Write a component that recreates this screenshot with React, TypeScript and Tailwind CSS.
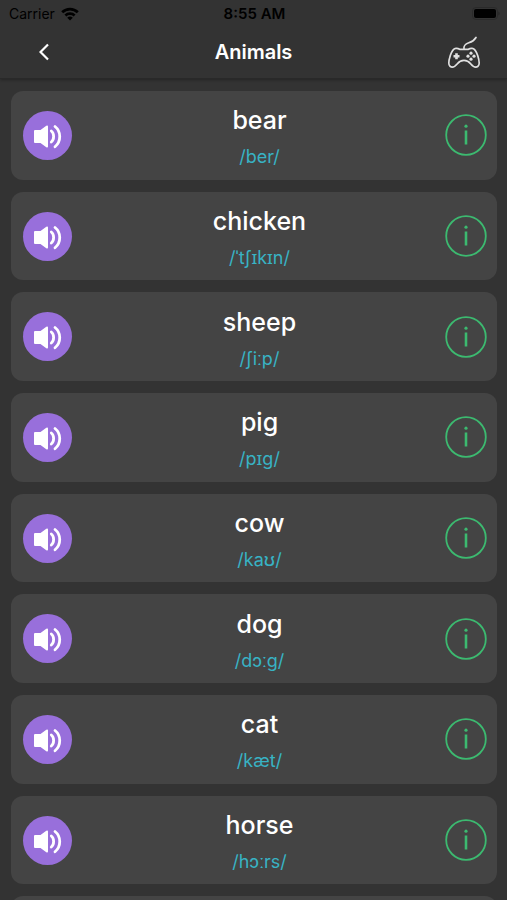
const words = [
  { word: 'bear', ipa: '/ber/' },
  { word: 'chicken', ipa: '/ˈtʃɪkɪn/' },
  { word: 'sheep', ipa: '/ʃiːp/' },
  { word: 'pig', ipa: '/pɪɡ/' },
  { word: 'cow', ipa: '/kaʊ/' },
  { word: 'dog', ipa: '/dɔːɡ/' },
  { word: 'cat', ipa: '/kæt/' },
  { word: 'horse', ipa: '/hɔːrs/' },
]

function WifiIcon() {
  return (
    <svg viewBox="0 0 18 14" className="h-[14px] w-[18px]" fill="none" stroke="currentColor" strokeWidth="2.8" aria-hidden="true">
      <path d="M1.2 5.2a11.2 11.2 0 0 1 15.6 0" />
      <path d="M4.4 8.5a6.6 6.6 0 0 1 9.2 0" />
      <path d="M9 13.6 6.2 10.8a4 4 0 0 1 5.6 0Z" fill="currentColor" stroke="none" />
    </svg>
  )
}

function BatteryIcon() {
  return (
    <svg viewBox="0 0 28 14" className="h-[14px] w-7" aria-hidden="true">
      <rect x="0.5" y="0.5" width="25" height="12" rx="3.5" fill="none" stroke="#2a2a2a" />
      <rect x="2" y="2" width="22" height="9" rx="2" fill="#000" />
      <path d="M26.5 4.5c1.3.6 1.3 3.4 0 4Z" fill="#222" />
    </svg>
  )
}

function GamepadIcon() {
  return (
    <svg viewBox="0 0 34 32" className="h-8 w-[34px]" fill="none" stroke="#e0e0e0" strokeWidth="1.7" strokeLinecap="round" strokeLinejoin="round" aria-hidden="true">
      <path d="M17 13.2C16.4 9.2 18.3 8 21.8 6.8 25.6 5.6 27.2 4.6 29 1.5" />
      <path d="M12.6 13.3c-1.3-.9-2.7-1.2-4-.9-2.9.5-4 3.2-5.3 7.2-1.6 5-2.2 9.3-.3 10.7 2.8 2 5.6-.4 7.4-2.6 1.6-2 3.6-3.3 6.6-3.3s5 1.3 6.600 3.300c1.800 2.200 4.600 4.600 7.400 2.600 1.900-1.400 1.300-5.700-.3-10.700-1.300-4-2.400-6.700-5.300-7.200-1.300-.3-2.700 0-4 .9Z" />
      <path d="M9.5 17.2v6M6.500 20.200h6" strokeWidth="2.6" strokeLinecap="butt" />
      <g fill="#e0e0e0" stroke="none">
        <circle cx="24" cy="17.2" r="1.6" />
        <circle cx="24" cy="23.2" r="1.6" />
        <circle cx="21" cy="20.2" r="1.6" />
        <circle cx="27" cy="20.2" r="1.6" />
      </g>
    </svg>
  )
}

function SpeakerIcon() {
  return (
    <svg viewBox="0 0 49 49" className="size-full" fill="none" stroke="#fff" strokeLinecap="round" aria-hidden="true">
      <path d="M12 19h5.5l5.8-4.200q1.700-.8 1.700.8v19.800q0 1.600-1.700.8L17.500 32H12q-1 0-1-1v-11q0-1 1-1Z" fill="#fff" stroke="none" />
      <path d="M28.3 20c3.100 2.500 3.100 8.500 0 11" strokeWidth="2.8" />
      <path d="M32 15.5c6.300 5 6.300 15 0 20.300" strokeWidth="2.8" />
    </svg>
  )
}

function InfoIcon() {
  return (
    <svg viewBox="0 0 42 42" className="size-full" fill="none" stroke="#3cba70" aria-hidden="true">
      <circle cx="21" cy="21" r="19.8" strokeWidth="1.8" />
      <path d="M21 16.5v14" strokeWidth="2.6" />
      <circle cx="21" cy="12.2" r="1.6" fill="#3cba70" stroke="none" />
    </svg>
  )
}

function WordCard({ word, ipa }: { word: string; ipa: string }) {
  return (
    <li className="flex aspect-[137/25] items-center rounded-xl bg-[#444] pr-[10px] pl-3">
      <button type="button" aria-label={`Play ${word}`} className="size-[49px] shrink-0 rounded-full bg-[#986fdb]">
        <SpeakerIcon />
      </button>
      <div className="flex-1 pt-[7px] pl-[2px] text-center">
        <p className="text-[25px] leading-8 font-medium text-white">{word}</p>
        <p className="mt-[5px] text-[18px] leading-8 text-[#38b3c4]">{ipa}</p>
      </div>
      <button type="button" aria-label={`About ${word}`} className="size-[42px] shrink-0">
        <InfoIcon />
      </button>
    </li>
  )
}

export default function App() {
  return (
    <div className="h-screen overflow-hidden bg-[#333] font-['Inter','Noto_Sans',sans-serif]">
      <header className="border-b border-[#292929] shadow-[0_1px_3px_rgba(0,0,0,0.3)]">
        <div className="grid h-7 grid-cols-3 items-center pr-[7px] pl-[9px] text-sm text-black">
          <div className="flex items-center gap-[6px]">
            <span>Carrier</span>
            <WifiIcon />
          </div>
          <span className="text-center text-[15px] font-semibold">8:55 AM</span>
          <div className="flex justify-end">
            <BatteryIcon />
          </div>
        </div>
        <nav className="grid h-[50px] grid-cols-3 items-center px-[26px] pb-[2px]">
          <button type="button" aria-label="Back" className="flex size-9 items-center justify-center text-white">
            <svg viewBox="0 0 10 18" className="h-[18px] w-[10px]" fill="none" stroke="currentColor" strokeWidth="2.2" aria-hidden="true">
              <path d="M9 1.5 1.5 9 9 16.5" />
            </svg>
          </button>
          <h1 className="text-center text-xl font-semibold text-white">Animals</h1>
          <button type="button" aria-label="Play game" className="flex h-9 items-center justify-self-end">
            <GamepadIcon />
          </button>
        </nav>
      </header>
      <ul className="flex flex-col gap-3 pt-3 pr-[10px] pl-[11px]">
        {words.map((item) => (
          <WordCard key={item.word} {...item} />
        ))}
        <li className="h-20 rounded-xl bg-[#444]" />
      </ul>
    </div>
  )
}
